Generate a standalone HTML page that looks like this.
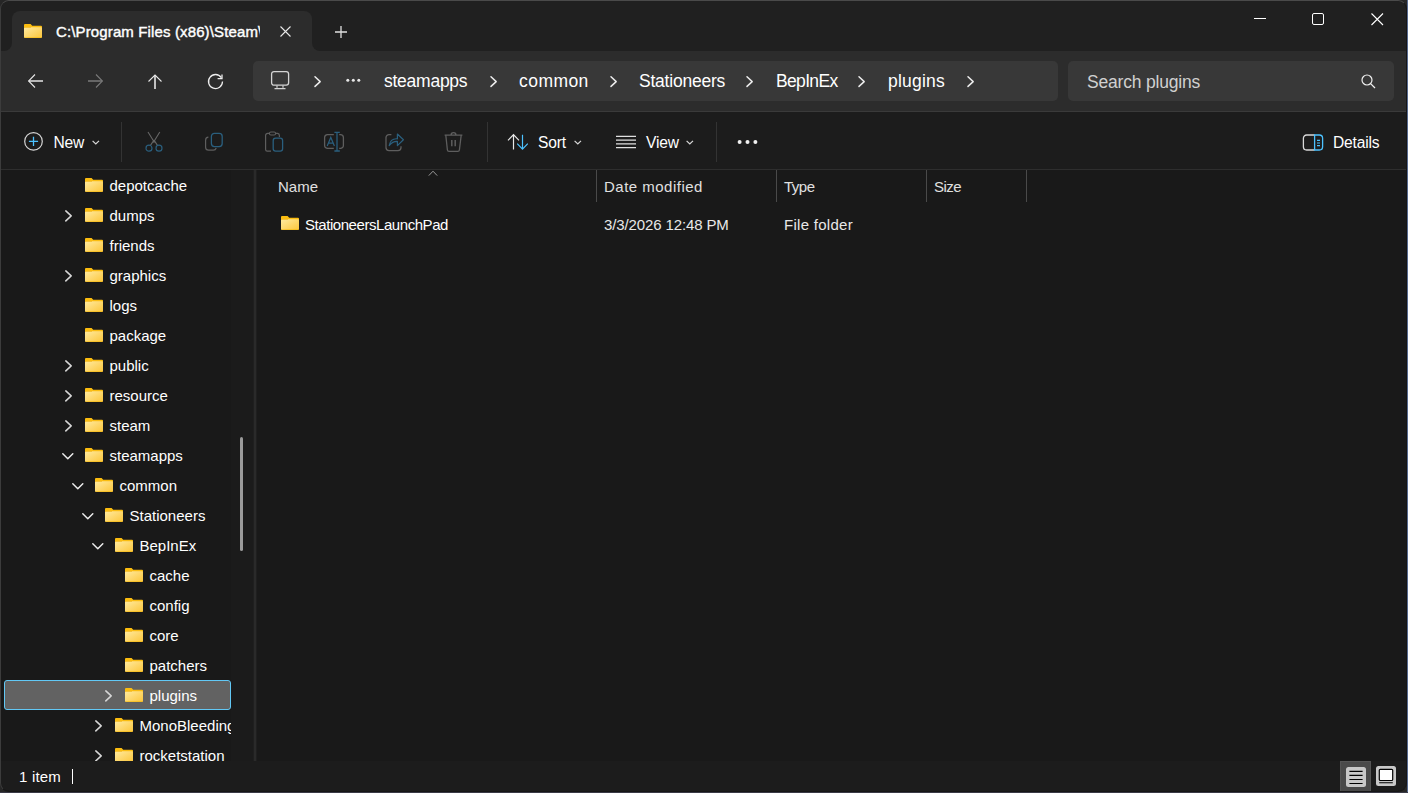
<!DOCTYPE html>
<html><head><meta charset="utf-8">
<style>
*{margin:0;padding:0;box-sizing:border-box}
html,body{width:1408px;height:793px;overflow:hidden;background:#262626}
body{position:relative;font-family:"Liberation Sans",sans-serif;color:#fff}
.a{position:absolute}
.t{position:absolute;white-space:nowrap;line-height:20px;height:20px;font-size:15px}
.f17{font-size:17.5px;letter-spacing:-0.45px}
#win{position:absolute;left:0;top:0;width:1408px;height:793px;clip-path:inset(1px 2px 2px 1px round 8px);background:#191919}
#bord{position:absolute;left:0;top:0;width:1407px;height:792px;border-radius:9px;border:1px solid #161616;border-top-color:#4a4a4a;border-left-color:#3c3c3c}
svg{position:absolute;overflow:visible}
</style></head>
<body>
<svg width="0" height="0" style="left:0;top:0">
 <defs>
  <linearGradient id="fg" x1="0" y1="0" x2="1" y2="1">
   <stop offset="0" stop-color="#ffeaa0"/><stop offset="1" stop-color="#fcc63a"/>
  </linearGradient>
  <symbol id="fold" viewBox="0 0 18 14">
   <path d="M1 0 H6.6 L8.2 1.8 H17 Q18 1.8 18 2.8 V6 H0 V1 Q0 0 1 0Z" fill="#fbbd10"/>
   <rect x="0" y="3.3" width="18" height="10.7" rx="1" fill="url(#fg)"/>
   <rect x="0" y="3.1" width="7" height="0.9" fill="#eeaa00" opacity="0.55"/>
   <rect x="0.5" y="13.2" width="17" height="0.8" fill="#f4b400" opacity="0.6"/>
  </symbol>
 </defs>
</svg>
<div class="a" style="left:1407px;top:0;width:1px;height:793px;background:#56698e"></div>
<div class="a" style="left:0;top:792px;width:1408px;height:1px;background:#3a3a46"></div>
<div id="win">
  <!-- title bar -->
  <div class="a" style="left:0;top:0;width:1408px;height:51px;background:#202020"></div>
  <div class="a" style="left:12px;top:11px;width:300px;height:40px;background:#2c2c2c;border-radius:8px 8px 0 0"></div>
  <div class="a" style="left:4px;top:43px;width:8px;height:8px;background:#2c2c2c"></div>
  <div class="a" style="left:-4px;top:35px;width:16px;height:16px;background:#202020;border-bottom-right-radius:8px"></div>
  <div class="a" style="left:312px;top:43px;width:8px;height:8px;background:#2c2c2c"></div>
  <div class="a" style="left:312px;top:35px;width:16px;height:16px;background:#202020;border-bottom-left-radius:8px"></div>
  <!-- tab content -->
  <svg width="18" height="14" style="left:24px;top:24px"><use href="#fold"/></svg>
  <div class="t" style="left:56px;top:22px;width:204px;overflow:hidden;-webkit-text-stroke:0.4px #fff;letter-spacing:0.13px">C:\Program Files (x86)\Steam\SteamLibrary</div>
  <svg width="12" height="12" style="left:280px;top:26px"><path d="M0.5 0.5 L10.5 10.5 M10.5 0.5 L0.5 10.5" stroke="#e8e8e8" stroke-width="1.1" fill="none"/></svg>
  <svg width="14" height="14" style="left:334px;top:25px"><path d="M7 1 V13 M1 7 H13" stroke="#e0e0e0" stroke-width="1.3" fill="none"/></svg>
  <!-- window controls -->
  <div class="a" style="left:1254px;top:18px;width:12px;height:1px;background:#fff"></div>
  <div class="a" style="left:1312px;top:13px;width:12px;height:12px;border:1px solid #fff;border-radius:2px"></div>
  <svg width="13" height="13" style="left:1371px;top:13px"><path d="M0.5 0.5 L12 12 M12 0.5 L0.5 12" stroke="#fff" stroke-width="1.1" fill="none"/></svg>

  <!-- nav bar -->
  <div class="a" style="left:0;top:51px;width:1408px;height:60px;background:#2c2c2c"></div>
  <div class="a" style="left:0;top:111px;width:1408px;height:1px;background:#3a3a3a"></div>
  <!-- back -->
  <svg width="16" height="16" style="left:28px;top:74px"><path d="M7 0.5 L0.6 7 L7 13.5" stroke="#e6e6e6" stroke-width="1.1" fill="none"/><path d="M0.8 7 H15" stroke="#e6e6e6" stroke-width="1.6" fill="none"/></svg>
  <svg width="16" height="16" style="left:88px;top:74px"><path d="M8 0.5 L14.4 7 L8 13.5" stroke="#7a7a7a" stroke-width="1.1" fill="none"/><path d="M0 7 H14.2" stroke="#7a7a7a" stroke-width="1.6" fill="none"/></svg>
  <svg width="16" height="16" style="left:148px;top:74px"><path d="M0.5 7.5 L7 1 L13.5 7.5" stroke="#e6e6e6" stroke-width="1.1" fill="none"/><path d="M7 1 V15" stroke="#e6e6e6" stroke-width="1.6" fill="none"/></svg>
  <svg width="16" height="16" style="left:208px;top:74px"><path d="M13.3 3.6 A7 7 0 1 0 14.5 7.5" stroke="#ececec" stroke-width="1.3" fill="none"/><path d="M14 0.5 V4.6 H9.6" stroke="#ececec" stroke-width="1.3" fill="none"/></svg>

  <!-- address bar -->
  <div class="a" style="left:253px;top:61px;width:805px;height:40px;background:#383838;border-radius:5px"></div>
  <svg width="20" height="20" style="left:271px;top:71px"><rect x="0.6" y="0.6" width="17" height="13.6" rx="2.4" stroke="#d4d4d4" stroke-width="1.3" fill="none"/><path d="M6 14.4 V16.8 M12 14.4 V16.8" stroke="#d4d4d4" stroke-width="1.2"/><path d="M3.5 17.6 H14.5" stroke="#d4d4d4" stroke-width="1.3"/></svg>
  <svg width="8" height="12" style="left:314px;top:76px"><path d="M1 0.8 L6.2 5.6 L1 10.4" fill="none" stroke="#ececec" stroke-width="1.5" stroke-linecap="round" stroke-linejoin="round"/></svg><svg width="8" height="12" style="left:489.5px;top:76px"><path d="M1 0.8 L6.2 5.6 L1 10.4" fill="none" stroke="#ececec" stroke-width="1.5" stroke-linecap="round" stroke-linejoin="round"/></svg><svg width="8" height="12" style="left:609.5px;top:76px"><path d="M1 0.8 L6.2 5.6 L1 10.4" fill="none" stroke="#ececec" stroke-width="1.5" stroke-linecap="round" stroke-linejoin="round"/></svg><svg width="8" height="12" style="left:746px;top:76px"><path d="M1 0.8 L6.2 5.6 L1 10.4" fill="none" stroke="#ececec" stroke-width="1.5" stroke-linecap="round" stroke-linejoin="round"/></svg><svg width="8" height="12" style="left:858px;top:76px"><path d="M1 0.8 L6.2 5.6 L1 10.4" fill="none" stroke="#ececec" stroke-width="1.5" stroke-linecap="round" stroke-linejoin="round"/></svg><svg width="8" height="12" style="left:967px;top:76px"><path d="M1 0.8 L6.2 5.6 L1 10.4" fill="none" stroke="#ececec" stroke-width="1.5" stroke-linecap="round" stroke-linejoin="round"/></svg>
  <svg width="16" height="6" style="left:346px;top:78px"><circle cx="1.8" cy="2.2" r="1.5" fill="#e6e6e6"/><circle cx="7.3" cy="2.2" r="1.5" fill="#e6e6e6"/><circle cx="12.8" cy="2.2" r="1.5" fill="#e6e6e6"/></svg>
  <div class="t f17" style="left:384px;top:71px;letter-spacing:-0.25px">steamapps</div>
  <div class="t f17" style="left:519px;top:71px;letter-spacing:0.45px">common</div>
  <div class="t f17" style="left:639px;top:71px;letter-spacing:-0.22px">Stationeers</div>
  <div class="t f17" style="left:776px;top:71px;letter-spacing:-0.67px">BepInEx</div>
  <div class="t f17" style="left:888px;top:71px;letter-spacing:0.23px">plugins</div>

  <!-- search -->
  <div class="a" style="left:1068px;top:61px;width:326px;height:40px;background:#383838;border-radius:5px"></div>
  <div class="t f17" style="left:1087px;top:72px;color:#d0d0d0;letter-spacing:-0.19px">Search plugins</div>
  <svg width="16" height="16" style="left:1361px;top:74px"><circle cx="6" cy="6" r="5" stroke="#f0f0f0" stroke-width="1.2" fill="none"/><path d="M9.6 9.6 L14 14" stroke="#f0f0f0" stroke-width="1.3"/></svg>

  <!-- command bar -->
  <div class="a" style="left:0;top:112px;width:1408px;height:57px;background:#1c1c1c"></div>
  <div class="a" style="left:0;top:169px;width:1408px;height:1px;background:#2e2e2e"></div>
  <svg width="20" height="20" style="left:24px;top:132px"><circle cx="9.5" cy="9.4" r="8.8" stroke="#d6d6d6" stroke-width="1.2" fill="none"/><path d="M9.5 4.8 V14 M4.9 9.4 H14.1" stroke="#4cc2ff" stroke-width="1.3"/></svg>
  <div class="t" style="left:53.5px;top:133px;font-size:15.6px;letter-spacing:-0.2px">New</div>
  <svg width="9" height="6" style="left:92px;top:140px"><path d="M0.6 0.8 L3.8 4 L7 0.8" stroke="#d8d8d8" stroke-width="1.2" fill="none"/></svg>
  <div class="a" style="left:121px;top:122px;width:1px;height:40px;background:#333"></div>
  <!-- cut -->
  <svg width="16" height="20" style="left:145px;top:131px"><path d="M3 1 L9.5 11.5 M14.8 1 L8.3 11.5 M5.3 14.6 L9 9 M12.6 14.6 L9 9" stroke="#666" stroke-width="1.1" fill="none"/><circle cx="4" cy="17.2" r="3" stroke="#2a5f7e" stroke-width="1.2" fill="none"/><circle cx="14" cy="17.2" r="3" stroke="#2a5f7e" stroke-width="1.2" fill="none"/></svg>
  <!-- copy -->
  <svg width="20" height="20" style="left:205px;top:132px"><path d="M3.4 5.2 A3 3 0 0 0 0.6 8.2 V15.2 A3 3 0 0 0 3.6 18.2 H8.4 A3 3 0 0 0 11.2 16" stroke="#5e5e5e" stroke-width="1.2" fill="none"/><rect x="6.4" y="1.4" width="10.8" height="13.2" rx="3" stroke="#2a5f7e" stroke-width="1.3" fill="none"/></svg>
  <!-- paste -->
  <svg width="20" height="22" style="left:265px;top:131px"><path d="M4.4 2.4 H2.6 A2 2 0 0 0 0.6 4.4 V18.6 A1.6 1.6 0 0 0 2.2 20.2 H6 M10.6 2.4 H12.6 A2 2 0 0 1 14.4 4.4 V6" stroke="#5e5e5e" stroke-width="1.2" fill="none"/><rect x="4.4" y="1" width="6.2" height="3" rx="1.5" stroke="#5e5e5e" stroke-width="1.1" fill="none"/><rect x="8.2" y="7.2" width="9.4" height="13" rx="2.4" stroke="#2a5f7e" stroke-width="1.3" fill="none"/></svg>
  <!-- rename -->
  <svg width="22" height="22" style="left:324px;top:131px"><path d="M9.8 3.6 H3.6 A3 3 0 0 0 0.6 6.6 V14.4 A3 3 0 0 0 3.6 17.4 H9.8 M15.2 3.6 H16.4 A3 3 0 0 1 19.4 6.6 V14.4 A3 3 0 0 1 16.4 17.4 H15.2" stroke="#5e5e5e" stroke-width="1.3" fill="none"/><path d="M3.2 15 L6.8 6.4 L10.4 15 M4.6 12.2 H9" stroke="#2a5f7e" stroke-width="1.2" fill="none"/><path d="M13 1.4 V20 M10.4 1.4 H15.8 M10.4 20 H15.8" stroke="#2a5f7e" stroke-width="1.3" fill="none"/></svg>
  <!-- share -->
  <svg width="22" height="20" style="left:385px;top:132px"><path d="M6.4 2.6 H4 A3 3 0 0 0 1 5.6 V15.6 A3 3 0 0 0 4 18.6 H13 A3 3 0 0 0 16 15.6 V14.2" stroke="#5e5e5e" stroke-width="1.3" fill="none"/><path d="M4.2 13.6 C5 9 8 6.4 12.4 6.8 V2 L18.4 7.8 L12.4 13.6 V9.4 C9 9.2 6.4 10.8 4.2 13.6Z" stroke="#2a5f7e" stroke-width="1.2" fill="none" stroke-linejoin="round"/></svg>
  <!-- delete -->
  <svg width="20" height="22" style="left:444px;top:131px"><path d="M0.6 4.2 H18.4 M1.8 4.2 L3.4 19 A1.6 1.6 0 0 0 5 20.4 H13.8 A1.6 1.6 0 0 0 15.4 19 L17.2 4.2 M7 4.2 Q7 1.6 9.5 1.6 Q12 1.6 12 4.2" stroke="#5e5e5e" stroke-width="1.3" fill="none"/><path d="M7.8 9 V15.2 M11.2 9 V15.2" stroke="#5e5e5e" stroke-width="1.5"/></svg>
  <div class="a" style="left:487px;top:122px;width:1px;height:40px;background:#333"></div>
  <!-- sort -->
  <svg width="22" height="18" style="left:507px;top:133px"><path d="M1 7.4 L6.5 1.6 L12 7.4 M6.5 1.6 V16.4" stroke="#e8e8e8" stroke-width="1.2" fill="none"/><path d="M10.2 10.6 L15.5 16.2 L20.8 10.6 M15.5 1.8 V16.2" stroke="#4cc2ff" stroke-width="1.2" fill="none"/></svg>
  <div class="t" style="left:538px;top:133px;font-size:15.6px;letter-spacing:-0.2px">Sort</div>
  <svg width="9" height="6" style="left:574px;top:140px"><path d="M0.6 0.8 L3.8 4 L7 0.8" stroke="#d8d8d8" stroke-width="1.2" fill="none"/></svg>
  <!-- view -->
  <svg width="22" height="14" style="left:615px;top:134px"><path d="M1 2.3 H21 M1 6.1 H21 M1 9.9 H21 M1 13.6 H21" stroke="#e0e0e0" stroke-width="1.2"/></svg>
  <div class="t" style="left:646px;top:133px;font-size:15.6px;letter-spacing:-0.2px">View</div>
  <svg width="9" height="6" style="left:686px;top:140px"><path d="M0.6 0.8 L3.8 4 L7 0.8" stroke="#d8d8d8" stroke-width="1.2" fill="none"/></svg>
  <div class="a" style="left:716px;top:122px;width:1px;height:40px;background:#333"></div>
  <svg width="22" height="6" style="left:737px;top:139px"><circle cx="2.6" cy="3" r="2" fill="#f0f0f0"/><circle cx="10.5" cy="3" r="2" fill="#f0f0f0"/><circle cx="18.4" cy="3" r="2" fill="#f0f0f0"/></svg>
  <!-- details -->
  <svg width="22" height="18" style="left:1302px;top:133.5px"><path d="M12.6 1 H4.6 A3.2 3.2 0 0 0 1.4 4.2 V12.8 A3.2 3.2 0 0 0 4.6 16 H12.6" stroke="#d8d8d8" stroke-width="1.3" fill="none"/><path d="M12.6 1 H17.4 A3.2 3.2 0 0 1 20.6 4.2 V12.8 A3.2 3.2 0 0 1 17.4 16 H12.6 Z" stroke="#4cc2ff" stroke-width="1.3" fill="none"/><path d="M15 6.4 H18 M15 9 H18 M15 11.6 H18" stroke="#4cc2ff" stroke-width="1.2"/></svg>
  <div class="t" style="left:1333px;top:133px;font-size:15.6px;letter-spacing:-0.2px">Details</div>

  <!-- nav pane -->

  <div class="a" style="left:231px;top:170px;width:22px;height:591px;background:#1b1b1b"></div>
  <div class="a" style="left:240px;top:437px;width:3px;height:114px;background:#9a9a9a;border-radius:2px"></div>
  <div class="a" style="left:253px;top:170px;width:4px;height:591px;background:#1f1f1f"></div><div class="a" style="left:254px;top:170px;width:2px;height:591px;background:#2a2a2a"></div>
  <div class="a" style="left:0;top:0;width:231px;height:761px;overflow:hidden">
  <svg class="fd" width="18" height="14" viewBox="0 0 18 14" style="left:85px;top:178px"><use href="#fold"/></svg>
<div class="t f15" style="left:109.5px;top:176px;color:#fff;">depotcache</div>
<svg width="8" height="12" style="left:65px;top:210px"><path d="M0.8 0.9 L6.2 5.9 L0.8 10.9" fill="none" stroke="#d6d6d6" stroke-width="1.5" stroke-linecap="round" stroke-linejoin="round"/></svg>
<svg class="fd" width="18" height="14" viewBox="0 0 18 14" style="left:85px;top:208px"><use href="#fold"/></svg>
<div class="t f15" style="left:109.5px;top:206px;color:#fff;">dumps</div>
<svg class="fd" width="18" height="14" viewBox="0 0 18 14" style="left:85px;top:238px"><use href="#fold"/></svg>
<div class="t f15" style="left:109.5px;top:236px;color:#fff;">friends</div>
<svg width="8" height="12" style="left:65px;top:270px"><path d="M0.8 0.9 L6.2 5.9 L0.8 10.9" fill="none" stroke="#d6d6d6" stroke-width="1.5" stroke-linecap="round" stroke-linejoin="round"/></svg>
<svg class="fd" width="18" height="14" viewBox="0 0 18 14" style="left:85px;top:268px"><use href="#fold"/></svg>
<div class="t f15" style="left:109.5px;top:266px;color:#fff;">graphics</div>
<svg class="fd" width="18" height="14" viewBox="0 0 18 14" style="left:85px;top:298px"><use href="#fold"/></svg>
<div class="t f15" style="left:109.5px;top:296px;color:#fff;">logs</div>
<svg class="fd" width="18" height="14" viewBox="0 0 18 14" style="left:85px;top:328px"><use href="#fold"/></svg>
<div class="t f15" style="left:109.5px;top:326px;color:#fff;">package</div>
<svg width="8" height="12" style="left:65px;top:360px"><path d="M0.8 0.9 L6.2 5.9 L0.8 10.9" fill="none" stroke="#d6d6d6" stroke-width="1.5" stroke-linecap="round" stroke-linejoin="round"/></svg>
<svg class="fd" width="18" height="14" viewBox="0 0 18 14" style="left:85px;top:358px"><use href="#fold"/></svg>
<div class="t f15" style="left:109.5px;top:356px;color:#fff;">public</div>
<svg width="8" height="12" style="left:65px;top:390px"><path d="M0.8 0.9 L6.2 5.9 L0.8 10.9" fill="none" stroke="#d6d6d6" stroke-width="1.5" stroke-linecap="round" stroke-linejoin="round"/></svg>
<svg class="fd" width="18" height="14" viewBox="0 0 18 14" style="left:85px;top:388px"><use href="#fold"/></svg>
<div class="t f15" style="left:109.5px;top:386px;color:#fff;">resource</div>
<svg width="8" height="12" style="left:65px;top:420px"><path d="M0.8 0.9 L6.2 5.9 L0.8 10.9" fill="none" stroke="#d6d6d6" stroke-width="1.5" stroke-linecap="round" stroke-linejoin="round"/></svg>
<svg class="fd" width="18" height="14" viewBox="0 0 18 14" style="left:85px;top:418px"><use href="#fold"/></svg>
<div class="t f15" style="left:109.5px;top:416px;color:#fff;">steam</div>
<svg width="12" height="8" style="left:62px;top:453px"><path d="M0.8 0.8 L5.8 5.8 L10.8 0.8" fill="none" stroke="#ececec" stroke-width="1.5" stroke-linecap="round" stroke-linejoin="round"/></svg>
<svg class="fd" width="18" height="14" viewBox="0 0 18 14" style="left:85px;top:448px"><use href="#fold"/></svg>
<div class="t f15" style="left:109.5px;top:446px;color:#fff;">steamapps</div>
<svg width="12" height="8" style="left:72px;top:483px"><path d="M0.8 0.8 L5.8 5.8 L10.8 0.8" fill="none" stroke="#ececec" stroke-width="1.5" stroke-linecap="round" stroke-linejoin="round"/></svg>
<svg class="fd" width="18" height="14" viewBox="0 0 18 14" style="left:95px;top:478px"><use href="#fold"/></svg>
<div class="t f15" style="left:119.5px;top:476px;color:#fff;">common</div>
<svg width="12" height="8" style="left:82px;top:513px"><path d="M0.8 0.8 L5.8 5.8 L10.8 0.8" fill="none" stroke="#ececec" stroke-width="1.5" stroke-linecap="round" stroke-linejoin="round"/></svg>
<svg class="fd" width="18" height="14" viewBox="0 0 18 14" style="left:105px;top:508px"><use href="#fold"/></svg>
<div class="t f15" style="left:129.5px;top:506px;color:#fff;">Stationeers</div>
<svg width="12" height="8" style="left:92px;top:543px"><path d="M0.8 0.8 L5.8 5.8 L10.8 0.8" fill="none" stroke="#ececec" stroke-width="1.5" stroke-linecap="round" stroke-linejoin="round"/></svg>
<svg class="fd" width="18" height="14" viewBox="0 0 18 14" style="left:115px;top:538px"><use href="#fold"/></svg>
<div class="t f15" style="left:139.5px;top:536px;color:#fff;">BepInEx</div>
<svg class="fd" width="18" height="14" viewBox="0 0 18 14" style="left:125px;top:568px"><use href="#fold"/></svg>
<div class="t f15" style="left:149.5px;top:566px;color:#fff;">cache</div>
<svg class="fd" width="18" height="14" viewBox="0 0 18 14" style="left:125px;top:598px"><use href="#fold"/></svg>
<div class="t f15" style="left:149.5px;top:596px;color:#fff;">config</div>
<svg class="fd" width="18" height="14" viewBox="0 0 18 14" style="left:125px;top:628px"><use href="#fold"/></svg>
<div class="t f15" style="left:149.5px;top:626px;color:#fff;">core</div>
<svg class="fd" width="18" height="14" viewBox="0 0 18 14" style="left:125px;top:658px"><use href="#fold"/></svg>
<div class="t f15" style="left:149.5px;top:656px;color:#fff;">patchers</div>
<div class="a" style="left:4px;top:680px;width:227px;height:30px;background:#626262;border:1px solid #62c8f5;border-radius:3px"></div>
<svg width="8" height="12" style="left:105px;top:690px"><path d="M0.8 0.9 L6.2 5.9 L0.8 10.9" fill="none" stroke="#d6d6d6" stroke-width="1.5" stroke-linecap="round" stroke-linejoin="round"/></svg>
<svg class="fd" width="18" height="14" viewBox="0 0 18 14" style="left:125px;top:688px"><use href="#fold"/></svg>
<div class="t f15" style="left:149.5px;top:686px;color:#fff;">plugins</div>
<svg width="8" height="12" style="left:95px;top:720px"><path d="M0.8 0.9 L6.2 5.9 L0.8 10.9" fill="none" stroke="#d6d6d6" stroke-width="1.5" stroke-linecap="round" stroke-linejoin="round"/></svg>
<svg class="fd" width="18" height="14" viewBox="0 0 18 14" style="left:115px;top:718px"><use href="#fold"/></svg>
<div class="t f15" style="left:139.5px;top:716px;color:#fff;">MonoBleeding</div>
<svg width="8" height="12" style="left:95px;top:750px"><path d="M0.8 0.9 L6.2 5.9 L0.8 10.9" fill="none" stroke="#d6d6d6" stroke-width="1.5" stroke-linecap="round" stroke-linejoin="round"/></svg>
<svg class="fd" width="18" height="14" viewBox="0 0 18 14" style="left:115px;top:748px"><use href="#fold"/></svg>
<div class="t f15" style="left:139.5px;top:746px;color:#fff;">rocketstation</div>
  </div>

  <!-- content headers -->
  <svg width="12" height="7" style="left:428px;top:170px"><path d="M0.8 5.6 L5 1.2 L9.2 5.6" stroke="#9a9a9a" stroke-width="1" fill="none"/></svg>
  <div class="t" style="left:278px;top:177px;color:#e0e0e0">Name</div>
  <div class="a" style="left:596px;top:170px;width:1px;height:32px;background:#4a4a4a"></div>
  <div class="t" style="left:604px;top:177px;color:#e0e0e0;letter-spacing:0.49px">Date modified</div>
  <div class="a" style="left:776px;top:170px;width:1px;height:32px;background:#4a4a4a"></div>
  <div class="t" style="left:784px;top:177px;color:#e0e0e0;letter-spacing:-0.5px">Type</div>
  <div class="a" style="left:926px;top:170px;width:1px;height:32px;background:#4a4a4a"></div>
  <div class="t" style="left:934px;top:177px;color:#e0e0e0;letter-spacing:-0.5px">Size</div>
  <div class="a" style="left:1026px;top:170px;width:1px;height:32px;background:#4a4a4a"></div>
  <!-- row -->
  <svg width="18" height="14" style="left:281px;top:216px"><use href="#fold"/></svg>
  <div class="t" style="left:305px;top:215px;letter-spacing:-0.44px">StationeersLaunchPad</div>
  <div class="t" style="left:604px;top:215px;color:#e8e8e8;letter-spacing:-0.12px">3/3/2026 12:48 PM</div>
  <div class="t" style="left:784px;top:215px;color:#e8e8e8;letter-spacing:0.28px">File folder</div>

  <!-- status bar -->
  <div class="a" style="left:0;top:761px;width:1408px;height:32px;background:#1c1c1c"></div>
  <div class="t" style="left:19px;top:767px;letter-spacing:0.2px">1 item</div>
  <div class="a" style="left:72px;top:769px;width:1px;height:15px;background:#fff"></div>
  <div class="a" style="left:1340px;top:761px;width:31px;height:31px;background:#4a4a4a;border:1px solid #555"></div>
  <svg width="20" height="20" style="left:1346px;top:767px"><rect x="0" y="0" width="20" height="20" rx="2.5" fill="#c8c8c8"/><path d="M3.4 4.4 H16.6 M3.4 8.4 H16.6 M3.4 12.5 H16.6 M3.4 16.5 H16.6" stroke="#000" stroke-width="1.1"/></svg>
  <svg width="20" height="20" style="left:1376px;top:766px"><rect x="0" y="0" width="20" height="20" rx="2.5" fill="#c8c8c8"/><rect x="3.3" y="3.3" width="13.4" height="11.2" rx="1" fill="#fff" stroke="#000" stroke-width="1.2"/><path d="M3.2 16.8 H16.8" stroke="#000" stroke-width="1.1"/></svg>
</div>
<div id="bord"></div>
</body></html>
